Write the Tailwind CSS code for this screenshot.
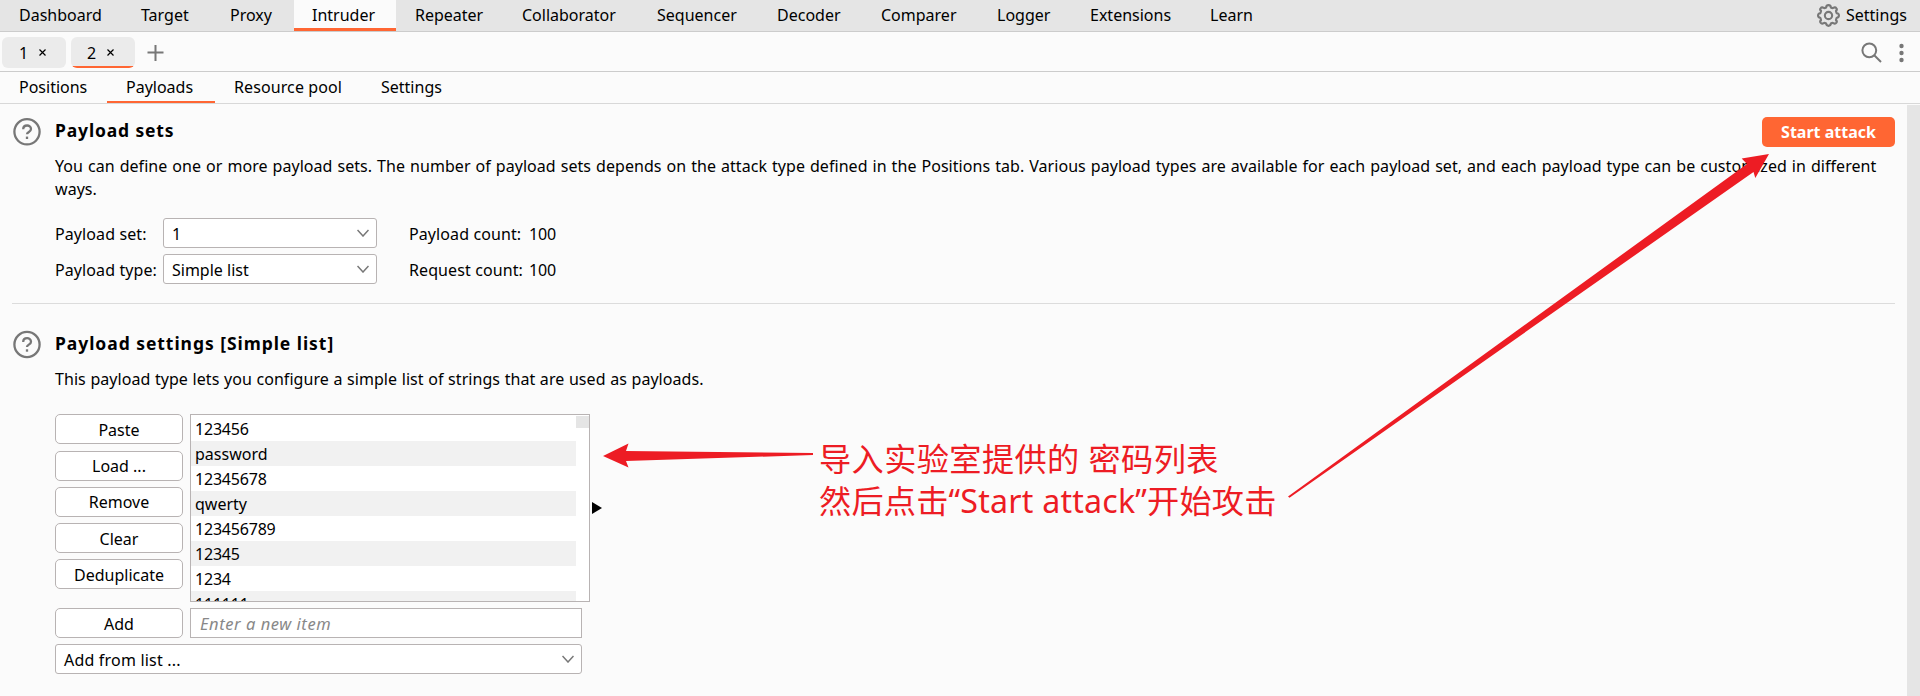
<!DOCTYPE html>
<html lang="en">
<head>
<meta charset="utf-8">
<title>Intruder</title>
<script src="https://cdn.jsdelivr.net/npm/@tailwindcss/browser@4"></script>
</head>
<body class="relative h-[696px] w-[1920px] overflow-hidden bg-[#fbfbfb] font-['Noto_Sans','Noto_Sans_CJK_SC',sans-serif] text-base leading-6 whitespace-nowrap text-black">
<nav class="flex h-8 border-b border-[#cccccc] bg-[#e5e5e5] pt-[3px]">
  <div class="w-[121px] pl-[19px]"><span>Dashboard</span></div>
  <div class="w-[89px] pl-5"><span>Target</span></div>
  <div class="w-[84px] pl-5"><span>Proxy</span></div>
  <div class="-mt-[3px] h-[31px] w-[102px] border-b-3 border-[#ff6633] bg-[#fbfbfb] pt-[3px] pl-[18px]"><span>Intruder</span></div>
  <div class="w-[107px] pl-[19px]"><span>Repeater</span></div>
  <div class="w-[134px] pl-[19px]"><span>Collaborator</span></div>
  <div class="w-[120px] pl-5"><span>Sequencer</span></div>
  <div class="w-[104px] pl-5"><span>Decoder</span></div>
  <div class="w-[116px] pl-5"><span>Comparer</span></div>
  <div class="w-[94px] pl-5"><span>Logger</span></div>
  <div class="w-[119px] pl-[19px]"><span>Extensions</span></div>
  <div class="w-[80px] pl-5"><span>Learn</span></div>
  <div class="ml-auto flex w-[103px] gap-1.5">
    <svg class="mt-px h-[23px] w-[23px]" viewBox="0 0 24 24" fill="none" stroke="#777" stroke-width="2.200" stroke-linejoin="round"><circle cx="12" cy="12" r="3.800"/><path d="M12 1.200c1.600 0 2.300.8 2.500 2.500.9.500 1.800.8 2.600.4.900-.9 2.200-.8 3 .2.800.9.700 2-.3 2.900.1 1 .4 1.700.8 2.500 1.700.2 2.300 1 2.300 2.300s-.6 2.100-2.300 2.300c-.4.800-.7 1.500-.8 2.500 1 .9 1.100 2 .3 2.900-.8 1-2.100 1.100-3 .200-.8-.4-1.700-.1-2.600.4-.2 1.700-.9 2.500-2.500 2.500s-2.300-.8-2.500-2.500c-.9-.5-1.800-.8-2.600-.4-.9.900-2.200.8-3-.2-.8-.9-.7-2 .3-2.900-.1-1-.4-1.700-.8-2.500C1.700 14.100 1.100 13.300 1.100 12s.6-2.100 2.300-2.300c.4-.8.700-1.500.8-2.500-1-.9-1.100-2-.3-2.900.8-1 2.100-1.100 3-.2.8.4 1.700.1 2.600-.4.2-1.700.9-2.500 2.500-2.500z"/></svg>
    <span>Settings</span>
  </div>
</nav>
<div class="flex h-10 border-b border-[#cccccc] pt-[5px] pl-0.5">
  <div class="flex h-[31px] w-16 items-center rounded-md bg-[#ebebeb] pl-[17px]"><span>1</span><svg class="ml-[11px] h-[7px] w-[7px]" viewBox="0 0 7 7" stroke="#000" stroke-width="1.200"><path d="M.5.5l6 6M6.500.5l-6 6"/></svg></div>
  <div class="ml-[5px] flex h-[31px] w-16 items-center overflow-hidden rounded-md bg-[linear-gradient(#ebebeb_29px,#ff6633_29px)] pl-[16px]"><span>2</span><svg class="ml-[11px] h-[7px] w-[7px]" viewBox="0 0 7 7" stroke="#000" stroke-width="1.200"><path d="M.5.5l6 6M6.500.5l-6 6"/></svg></div>
  <svg class="mt-[7px] ml-[12px] h-[17px] w-[17px]" viewBox="0 0 17 17" stroke="#777" stroke-width="2"><path d="M8.500 1v16M.5 8.500h16"/></svg>
  <svg class="mt-[5px] mr-[17px] ml-auto h-[21px] w-[21px]" viewBox="0 0 21 21" fill="none" stroke="#777" stroke-width="2"><circle cx="8.300" cy="8.300" r="6.900"/><path d="M13 13l7 7"/></svg>
  <svg class="mt-[6px] mr-[16px] h-5 w-[5px]" viewBox="0 0 5 20" fill="#777"><circle cx="2.500" cy="3" r="2.200"/><circle cx="2.500" cy="10" r="2.200"/><circle cx="2.500" cy="17" r="2.200"/></svg>
</div>
<div class="flex h-8 border-b border-[#d8d8d8]">
  <div class="w-[107px] pt-[3px] pl-[19px]"><span>Positions</span></div>
  <div class="h-[31px] w-[108px] border-b-2 border-[#ff6633] pt-[3px] pl-[19px]"><span>Payloads</span></div>
  <div class="w-[146px] pt-[3px] pl-[19px]"><span class="tracking-[0.1px]">Resource pool</span></div>
  <div class="pt-[3px] pl-5"><span>Settings</span></div>
</div>
<main class="flex h-[592px]">
  <div class="w-[1895px] pt-[13px] pl-3">
    <section class="flex h-[187px] border-b border-[#dcdcdc]">
      <svg class="mr-[14px] h-[29px] w-[29px]" viewBox="0 0 29 29" fill="none" stroke="#777" stroke-width="2.300"><circle cx="15" cy="14.800" r="12.600"/><path d="M11.200 12.300c0-5 7.800-5 7.800-.3 0 3-4 2.800-4 5.300"/><path d="M15 19.600v2.400"/></svg>
      <div class="flex-1">
        <div class="flex h-[30px] justify-between">
          <h2 class="text-[17.5px] leading-[26px] font-bold tracking-[0.85px]"><span>Payload sets</span></h2>
          <div class="h-[30px] w-[133px] rounded-[5px] bg-[#ff6633] text-center leading-[30px] font-bold text-white"><span>Start attack</span></div>
        </div>
        <p class="mt-2 leading-[23px] tracking-[0.05px] [word-spacing:0.77px]"><span>You can define one or more payload sets. The number of payload sets depends on the attack type defined in the Positions tab. Various payload types are available for each payload set, and each payload type can be customized in different</span><br><span>ways.</span></p>
        <div class="mt-[17px] grid w-[600px] grid-cols-[108px_214px_120px_1fr] gap-y-1.5 leading-8">
          <span class="h-[30px] tracking-[0.1px]">Payload set:</span>
          <div class="flex h-[30px] items-center justify-between rounded-[3px] border border-[#b8b3b3] bg-white pr-[7px] pl-2"><span class="pt-px">1</span><svg class="h-2 w-3" viewBox="0 0 12 8" fill="none" stroke="#777" stroke-width="1.500"><path d="M.5 1l5.500 6 5.500-6"/></svg></div>
          <span class="h-[30px] pl-8 tracking-[0.1px]">Payload count:</span><span class="h-[30px] pl-8 tracking-[-0.2px]">100</span>
          <span class="h-[30px] tracking-[0.1px]">Payload type:</span>
          <div class="flex h-[30px] items-center justify-between rounded-[3px] border border-[#b8b3b3] bg-white pr-[7px] pl-2"><span class="pt-px">Simple list</span><svg class="h-2 w-3" viewBox="0 0 12 8" fill="none" stroke="#777" stroke-width="1.500"><path d="M.5 1l5.500 6 5.500-6"/></svg></div>
          <span class="h-[30px] pl-8 tracking-[0.1px]">Request count:</span><span class="h-[30px] pl-8 tracking-[-0.2px]">100</span>
        </div>
      </div>
    </section>
    <section class="flex pt-[26px]">
      <svg class="mr-[14px] h-[29px] w-[29px]" viewBox="0 0 29 29" fill="none" stroke="#777" stroke-width="2.300"><circle cx="15" cy="14.500" r="12.600"/><path d="M11.200 12c0-5 7.800-5 7.800-.3 0 3-4 2.800-4 5.300"/><path d="M15 19.300v2.400"/></svg>
      <div>
        <h2 class="h-[26px] text-[17.5px] leading-[26px] font-bold tracking-[0.95px]"><span>Payload settings [Simple list]</span></h2>
        <p class="mt-[11px] h-6 tracking-[0.05px] [word-spacing:0.4px]"><span>This payload type lets you configure a simple list of strings that are used as payloads.</span></p>
        <div class="mt-[23px] flex h-[188px]">
          <div class="flex w-32 flex-col gap-1.5 text-center leading-[30px]">
            <div class="mb-px h-[30px] rounded-[5px] border border-[#b8b3b3] bg-white"><span>Paste</span></div>
            <div class="h-[30px] rounded-[5px] border border-[#b8b3b3] bg-white leading-7"><span>Load ...</span></div>
            <div class="h-[30px] rounded-[5px] border border-[#b8b3b3] bg-white leading-7"><span>Remove</span></div>
            <div class="h-[30px] rounded-[5px] border border-[#b8b3b3] bg-white"><span>Clear</span></div>
            <div class="h-[30px] rounded-[5px] border border-[#b8b3b3] bg-white"><span>Deduplicate</span></div>
          </div>
          <div class="ml-[7px] flex w-[400px] overflow-hidden border border-[#b8b3b3] bg-white pt-px">
            <div class="w-[385px] leading-[26px] tracking-[-0.2px]">
              <div class="h-[25px] pl-[4px]"><span>123456</span></div>
              <div class="h-[25px] bg-[#f1f1f1] pl-[4px] tracking-normal"><span>password</span></div>
              <div class="h-[25px] pl-[4px]"><span>12345678</span></div>
              <div class="h-[25px] bg-[#f1f1f1] pl-[4px] tracking-normal"><span>qwerty</span></div>
              <div class="h-[25px] pl-[4px]"><span>123456789</span></div>
              <div class="h-[25px] bg-[#f1f1f1] pl-[4px]"><span>12345</span></div>
              <div class="h-[25px] pl-[4px]"><span>1234</span></div>
              <div class="h-[25px] bg-[#f1f1f1] pl-[4px]"><span>111111</span></div>
            </div>
            <div class="h-3 w-[13px] bg-[#e5e5e5]"></div>
          </div>
          <svg class="mt-[88px] ml-[2px] h-3 w-[10px]" viewBox="0 0 10 12"><path d="M0 0l10 6-10 6z"/></svg>
        </div>
        <div class="mt-1.5 flex w-[527px] gap-[7px] leading-[30px]">
          <div class="h-[30px] w-32 rounded-[5px] border border-[#b8b3b3] bg-white text-center"><span>Add</span></div>
          <div class="h-[30px] flex-1 border border-[#b8b3b3] bg-white pl-[9px] text-[16.5px] tracking-[0.55px] text-[#888] italic"><span>Enter a new item</span></div>
        </div>
        <div class="mt-1.5 flex h-[30px] w-[527px] items-center justify-between rounded-[3px] border border-[#b8b3b3] bg-white pr-[7px] pl-2"><span class="pt-px tracking-[0.2px]">Add from list ...</span><svg class="h-2 w-3" viewBox="0 0 12 8" fill="none" stroke="#777" stroke-width="1.500"><path d="M.5 1l5.500 6 5.500-6"/></svg></div>
      </div>
    </section>
  </div>
  <div class="mt-px ml-auto w-[13px] bg-[#e5e5e5]"></div>
</main>
<svg class="absolute inset-0 h-[696px] w-[1920px]" viewBox="0 0 1920 696" fill="#ed1c24"><path d="M603 456l25.500-12.500-2.500 7.500 187 2v2l-187 6 2.500 6.500z"/><path d="M1769 154l-27.300 4.500 5.300 5.500L1288 496.500l1.500 1.200L1753.500 172l1.800 6z"/></svg>
<div class="absolute top-[438px] left-[819px] text-[32.2px] leading-[42px] tracking-[0.4px] text-[#ed1c24]"><span>导入实验室提供的 密码列表</span><br><span class="tracking-[0.2px]">然后点击“Start attack”开始攻击</span></div>
</body>
</html>
